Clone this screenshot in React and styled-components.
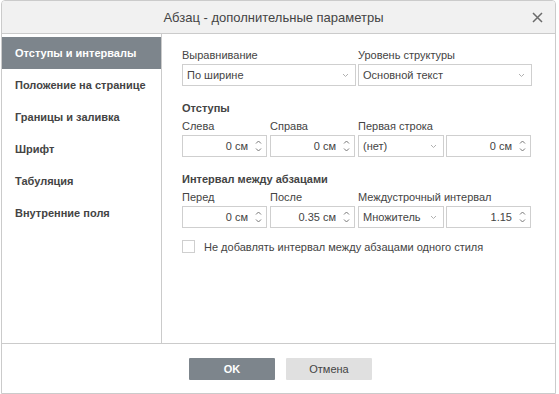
import React from 'react'
import styled, { createGlobalStyle } from 'styled-components'

const GlobalStyle = createGlobalStyle`
  body {
    margin: 0;
    background: #ffffff;
    font-family: "Liberation Sans", Arial, sans-serif;
  }
`

const menu = [
  'Отступы и интервалы',
  'Положение на странице',
  'Границы и заливка',
  'Шрифт',
  'Табуляция',
  'Внутренние поля',
]

const Chevron = () => (
  <svg width="7" height="5" viewBox="0 0 7 5">
    <path d="M1 1 L3.5 3.5 L6 1" fill="none" stroke="#b0b0b0" strokeWidth="1" />
  </svg>
)

const Spinner = () => (
  <SpinBox>
    <svg width="7" height="4" viewBox="0 0 7 4">
      <path d="M1 3.5 L3.5 1 L6 3.5" fill="none" stroke="#777" strokeWidth="1" />
    </svg>
    <svg width="7" height="4" viewBox="0 0 7 4">
      <path d="M1 0.5 L3.5 3 L6 0.5" fill="none" stroke="#777" strokeWidth="1" />
    </svg>
  </SpinBox>
)

const Select = ({ value, wide }) => (
  <SelectBox $wide={wide}>
    <span>{value}</span>
    <Chevron />
  </SelectBox>
)

const Number = ({ value }) => (
  <NumberBox>
    <span>{value}</span>
    <Spinner />
  </NumberBox>
)

const App = () => {
  return (
    <>
      <GlobalStyle />
      <Dialog>
        <Header>
          <Title>Абзац - дополнительные параметры</Title>
          <Close>
            <svg width="11" height="11" viewBox="0 0 11 11">
              <path d="M1 1 L10 10 M10 1 L1 10" stroke="#6b6b6b" strokeWidth="1.5" />
            </svg>
          </Close>
        </Header>
        <Body>
          <Sidebar>
            {menu.map((item, i) => (
              <MenuItem key={item} $active={i === 0}>{item}</MenuItem>
            ))}
          </Sidebar>
          <Content>
            <Grid>
              <Field $span={2}>
                <Label>Выравнивание</Label>
                <Select value="По ширине" wide />
              </Field>
              <Field $span={2}>
                <Label>Уровень структуры</Label>
                <Select value="Основной текст" wide />
              </Field>
            </Grid>

            <Section>Отступы</Section>
            <Grid>
              <Field>
                <Label>Слева</Label>
                <Number value="0 см" />
              </Field>
              <Field>
                <Label>Справа</Label>
                <Number value="0 см" />
              </Field>
              <Field>
                <Label>Первая строка</Label>
                <Select value="(нет)" />
              </Field>
              <Field>
                <Label>&nbsp;</Label>
                <Number value="0 см" />
              </Field>
            </Grid>

            <Section>Интервал между абзацами</Section>
            <Grid>
              <Field>
                <Label>Перед</Label>
                <Number value="0 см" />
              </Field>
              <Field>
                <Label>После</Label>
                <Number value="0.35 см" />
              </Field>
              <Field>
                <Label>Междустрочный интервал</Label>
                <Select value="Множитель" />
              </Field>
              <Field>
                <Label>&nbsp;</Label>
                <Number value="1.15" />
              </Field>
            </Grid>

            <CheckRow>
              <Check />
              <span>Не добавлять интервал между абзацами одного стиля</span>
            </CheckRow>
          </Content>
        </Body>
        <Footer>
          <Button $primary>OK</Button>
          <Button>Отмена</Button>
        </Footer>
      </Dialog>
    </>
  )
}

export default App

const Dialog = styled.div`
  width: 553px;
  height: 392px;
  margin-left: 1px;
  border: 1px solid #cbcbcb;
  border-radius: 4px 4px 0 0;
  display: flex;
  flex-direction: column;
  background: #fff;
  overflow: hidden;
`

const Header = styled.div`
  height: 32px;
  flex: none;
  background: #f1f1f1;
  border-bottom: 1px solid #cbcbcb;
  display: flex;
  align-items: center;
  justify-content: center;
  position: relative;
`

const Title = styled.div`
  font-size: 13px;
  color: #444;
  margin-left: -10px;
`

const Close = styled.div`
  position: absolute;
  right: 12px;
  top: 11px;
  line-height: 0;
`

const Body = styled.div`
  flex: 1;
  display: flex;
  border-bottom: 1px solid #cbcbcb;
`

const Sidebar = styled.div`
  width: 159px;
  flex: none;
  border-right: 1px solid #cbcbcb;
  padding-top: 3px;
`

const MenuItem = styled.div`
  height: 32px;
  display: flex;
  align-items: center;
  padding-left: 13px;
  font-size: 11px;
  font-weight: bold;
  color: ${p => (p.$active ? '#fff' : '#444')};
  background: ${p => (p.$active ? '#7d858c' : 'transparent')};
`

const Content = styled.div`
  flex: 1;
  padding: 14px 0 0 20px;
`

const Grid = styled.div`
  display: grid;
  grid-template-columns: repeat(4, 85px);
  column-gap: 3px;
`

const Field = styled.div`
  grid-column: span ${p => p.$span || 1};
  display: flex;
  flex-direction: column;
`

const Label = styled.div`
  font-size: 11px;
  color: #444;
  height: 15px;
  line-height: 15px;
  margin-bottom: 1px;
  white-space: nowrap;
`

const SelectBox = styled.div`
  height: 20px;
  border: 1px solid #cfcfcf;
  display: flex;
  align-items: center;
  justify-content: space-between;
  padding: 0 6px 0 4px;
  box-sizing: content-box;
  width: ${p => (p.$wide ? '162px' : '74px')};
  font-size: 11px;
  color: #444;
`

const NumberBox = styled.div`
  height: 20px;
  border: 1px solid #cfcfcf;
  display: flex;
  align-items: center;
  justify-content: flex-end;
  gap: 7px;
  padding-right: 4px;
  box-sizing: content-box;
  width: 79px;
  font-size: 11px;
  color: #444;
`

const SpinBox = styled.div`
  display: flex;
  flex-direction: column;
  gap: 4px;
  line-height: 0;
`

const Section = styled.div`
  font-size: 11px;
  font-weight: bold;
  color: #444;
  margin: 16px 0 5px;
`

const CheckRow = styled.div`
  display: flex;
  align-items: center;
  gap: 9px;
  margin-top: 12px;
  font-size: 11px;
  color: #444;
`

const Check = styled.div`
  width: 11px;
  height: 11px;
  border: 1px solid #cfcfcf;
`

const Footer = styled.div`
  height: 49px;
  flex: none;
  display: flex;
  align-items: center;
  justify-content: center;
  gap: 11px;
  padding-left: 4px;
`

const Button = styled.div`
  width: 86px;
  height: 22px;
  display: flex;
  align-items: center;
  justify-content: center;
  font-size: 11px;
  font-weight: ${p => (p.$primary ? 'bold' : 'normal')};
  color: ${p => (p.$primary ? '#fff' : '#444')};
  background: ${p => (p.$primary ? '#7d858c' : '#e0e0e0')};
  border-radius: 1px;
`
